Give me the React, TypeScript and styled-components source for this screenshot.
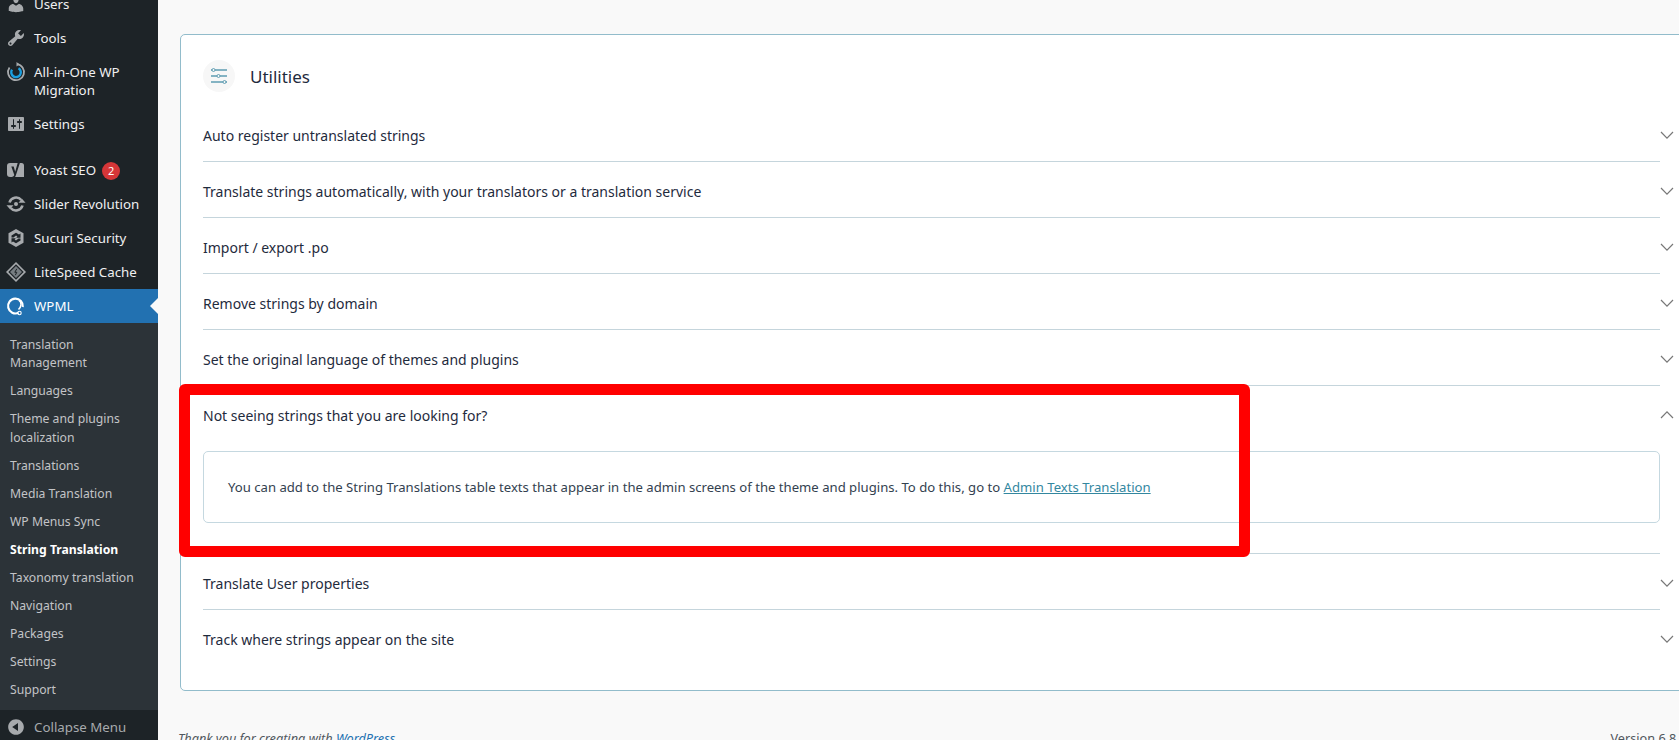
import styled, { createGlobalStyle } from "styled-components";

const GlobalStyle = createGlobalStyle`
  html, body {
    margin: 0;
    height: 740px;
    overflow: hidden;
    background: #f9f9f9;
    font-family: "Noto Sans", "Open Sans", sans-serif;
  }
`;

const Page = styled.div`
  display: flex;
  width: 1679px;
  height: 740px;
  overflow: hidden;
`;

const Sidebar = styled.aside`
  flex: 0 0 158px;
  height: 740px;
  display: flex;
  flex-direction: column;
  justify-content: flex-end;
  overflow: hidden;
  background: #1d2327;
`;

const MenuItem = styled.div<{ $gap?: number }>`
  display: flex;
  flex: 0 0 auto;
  align-items: flex-start;
  gap: 8px;
  padding: 8px 8px 8px 6px;
  margin-bottom: ${(p) => p.$gap ?? 0}px;
  color: #f0f0f1;
  font-size: 13.3px;
  line-height: 18px;
`;

const ActiveItem = styled(MenuItem)`
  position: relative;
  align-items: center;
  background: #2271b1;
  color: #fff;
  height: 34px;
  padding-top: 0;
  padding-bottom: 0;
  box-sizing: border-box;
  &::after {
    content: "";
    position: absolute;
    right: 0;
    top: 9px;
    border: 8px solid transparent;
    border-right-color: #f9f9f9;
    border-left-width: 0;
  }
`;

const IconSlot = styled.span`
  flex: 0 0 20px;
  width: 20px;
  height: 20px;
  margin: -1px 0;
  display: flex;
  color: #a7aaad;
`;

const Badge = styled.span`
  display: inline-flex;
  align-items: center;
  justify-content: center;
  width: 18px;
  height: 18px;
  margin: -3px 0 -3px 6px;
  border-radius: 50%;
  background: #d63638;
  color: #fff;
  font-size: 11px;
  vertical-align: middle;
`;

const Submenu = styled.div`
  flex: 0 0 auto;
  background: #2c3338;
  padding: 8px 0 6.2px;
`;

const SubItem = styled.div<{ $current?: boolean }>`
  padding: 4.8px 10px;
  color: ${(p) => (p.$current ? "#fff" : "#c3c4c7")};
  font-weight: ${(p) => (p.$current ? 700 : 400)};
  font-size: 12.2px;
  line-height: 18.4px;
`;

const SubLabel = styled.span`
  white-space: pre-line;
`;

const Collapse = styled(MenuItem)`
  align-items: center;
  height: 30px;
  padding-top: 4px;
  padding-bottom: 0;
  box-sizing: border-box;
  color: #a7aaad;
`;

const Main = styled.main`
  flex: 1 1 auto;
  min-width: 0;
  display: flex;
  flex-direction: column;
  padding: 34px 0 0 22px;
`;

const Panel = styled.section`
  width: 1520px;
  height: 657px;
  box-sizing: border-box;
  padding: 25px 0 0 22px;
  background: #fff;
  border: 1px solid #92bccb;
  border-radius: 5px;
  flex: 0 0 auto;
`;

const PanelHeader = styled.header`
  display: flex;
  align-items: center;
  gap: 15px;
  height: 32px;
  margin-bottom: 14px;
`;

const HeaderIcon = styled.span`
  width: 32px;
  height: 32px;
  border-radius: 50%;
  background: #f7f7f7;
  display: flex;
  align-items: center;
  justify-content: center;
`;

const PanelTitle = styled.h2`
  margin: 0;
  font-size: 17px;
  font-weight: 400;
  color: #1f2b3d;
`;

const Row = styled.div`
  display: flex;
  width: 1476px;
`;

const RowBody = styled.div<{ $last?: boolean }>`
  width: 1457px;
  flex: 0 0 auto;
  box-sizing: border-box;
  border-bottom: ${(p) => (p.$last ? "0" : "1px solid #c5d5dc")};
`;

const RowHead = styled.div`
  height: 55px;
  box-sizing: border-box;
  padding-top: 20px;
  font-size: 14px;
  line-height: 20px;
  color: #1f2b3d;
`;

const Arrow = styled.span<{ $open?: boolean }>`
  margin: 22px 0 0 0;
  width: 14px;
  height: 14px;
  color: #777;
  display: flex;
  transform: ${(p) => (p.$open ? "rotate(180deg)" : "none")};
`;

const OpenBody = styled.div`
  height: 112px;
  box-sizing: border-box;
  padding-top: 10px;
`;

const DetailBox = styled.div`
  height: 72px;
  box-sizing: border-box;
  padding: 0 24px;
  display: flex;
  align-items: center;
  border: 1px solid #c5d8e0;
  border-radius: 5px;
  font-size: 13.14px;
  color: #33414f;
  white-space: pre;
`;

const DetailLink = styled.a`
  color: #33879f;
  text-decoration: underline;
`;

const Highlight = styled.div`
  position: absolute;
  left: 179px;
  top: 384px;
  width: 1071px;
  height: 173px;
  box-sizing: border-box;
  border: 11px solid #ff0000;
  border-radius: 6px;
  pointer-events: none;
`;

const Footer = styled.footer`
  display: flex;
  justify-content: space-between;
  width: 1520px;
  margin-top: 38px;
  font-size: 12.7px;
  line-height: 18px;
  color: #50575e;
`;

const Thanks = styled.span`
  font-style: italic;
  margin-left: -2px;
  a {
    color: #2271b1;
    text-decoration: underline;
  }
`;

const Version = styled.span`
  margin-right: 13px;
`;

const Dash = ({ d }: { d: string }) => (
  <svg width="20" height="20" viewBox="0 0 20 20" fill="currentColor">
    <path d={d} />
  </svg>
);

const usersPath =
  "M10 9.25c-2.27 0-2.73-3.44-2.73-3.44C7 4.02 7.82 2 9.97 2c2.16 0 2.98 2.02 2.71 3.81 0 0-.41 3.44-2.68 3.44zm0 2.57L12.72 10c2.39 0 4.52 2.33 4.52 4.53v2.49s-3.65 1.13-7.24 1.13c-3.65 0-7.24-1.13-7.24-1.13v-2.49c0-2.25 1.94-4.48 4.47-4.48z";
const toolsPath =
  "M16.68 9.77c-1.34 1.34-3.3 1.67-4.95.99l-5.41 6.52c-.99.99-2.59.99-3.58 0s-.99-2.59 0-3.58l6.52-5.42c-.68-1.65-.35-3.61.99-4.95 1.28-1.28 3.12-1.62 4.72-1.06l-2.89 2.89 2.82 2.82 2.86-2.87c.53 1.58.18 3.39-1.08 4.66zM3.81 16.21c.4.39 1.04.39 1.43 0 .4-.4.4-1.04 0-1.43-.39-.4-1.03-.4-1.43 0-.39.39-.39 1.03 0 1.43z";
const settingsPath =
  "M18 16V4c0-.55-.45-1-1-1H3c-.55 0-1 .45-1 1v12c0 .55.45 1 1 1h14c.55 0 1-.45 1-1zM8 11h1c.55 0 1 .45 1 1s-.45 1-1 1H8v1.5c0 .28-.22.5-.5.5s-.5-.22-.5-.5V13H6c-.55 0-1-.45-1-1s.45-1 1-1h1V5.5c0-.28.22-.5.5-.5s.5.22.5.5V11zm5-2h-1c-.55 0-1-.45-1-1s.45-1 1-1h1V5.5c0-.28.22-.5.5-.5s.5.22.5.5V7h1c.55 0 1 .45 1 1s-.45 1-1 1h-1v5.5c0 .28-.22.5-.5.5s-.5-.22-.5-.5V9z";
const collapsePath =
  "M10 2.16c4.33 0 7.84 3.51 7.84 7.84s-3.51 7.84-7.84 7.84S2.16 14.33 2.16 10 5.71 2.16 10 2.16zm2 11.72V6.12L6.18 9.97z";

const MigrationIcon = () => (
  <svg width="20" height="20" viewBox="0 0 20 20" fill="none">
    <path d="M11 2.200a8 8 0 1 1-7.500 3.300" stroke="#a7aaad" strokeWidth="1.800" />
    <path d="M10.500 0v4.500l3-2.300z" fill="#a7aaad" />
    <path d="M12.500 6.200a4.800 4.800 0 1 1-6.500 1.500" stroke="#1b9fe0" strokeWidth="2.400" />
  </svg>
);

const YoastIcon = () => (
  <svg width="20" height="20" viewBox="0 0 20 20">
    <path d="M4 3h11.500a2.500 2.500 0 0 1 2.500 2.500V17H4a3 3 0 0 1-3-3V6a3 3 0 0 1 3-3z" fill="#a7aaad" />
    <path d="M5.300 6.500h2.400l1.500 5.200L12.300.8h2.300L9.800 15.500c-.6 1.900-1.900 3-3.800 3v-1.700c1.200 0 1.900-.6 2.300-1.800z" fill="#1d2327" />
  </svg>
);

const SliderIcon = () => (
  <svg width="20" height="20" viewBox="0 0 20 20" fill="none">
    <path d="M3.500 8.500a6.800 6.800 0 0 1 11.800-2.500" stroke="#a7aaad" strokeWidth="2.600" />
    <path d="M16.500 11.500a6.800 6.800 0 0 1-11.800 2.500" stroke="#a7aaad" strokeWidth="2.600" />
    <path d="M12.500 8.800h7l-3.500-4zM7.500 11.200h-7l3.500 4z" fill="#a7aaad" />
    <circle cx="10" cy="10" r="2" fill="#a7aaad" />
  </svg>
);

const SucuriIcon = () => (
  <svg width="20" height="20" viewBox="0 0 20 20">
    <path d="M10 1l7.500 4.300v9.400L10 19l-7.500-4.300V5.300z" fill="#a7aaad" />
    <path d="M5.500 9.500V7.500L10 4.800l3 1.700 1.500-1v4.200h-4.300l1.200-1.200L10 7.600 7.500 9.500zM14.500 10.500v2L10 15.200l-3-1.700-1.500 1v-4.200h4.300l-1.200 1.200 1.400.9 2.500-1.900z" fill="#1d2327" />
  </svg>
);

const LiteSpeedIcon = () => (
  <svg width="20" height="20" viewBox="0 0 20 20" fill="none">
    <path d="M10 0L20 10 10 20 0 10z" fill="#a7aaad" />
    <path d="M10 2.300L17.700 10 10 17.700 2.300 10z" fill="#1d2327" />
    <path d="M10 4L16 10 10 16 4 10z" fill="#777d82" />
    <path d="M10.800 6.800L8.800 10.300h2L9.300 13.200" stroke="#1d2327" strokeWidth="1" />
  </svg>
);

const WpmlIcon = () => (
  <svg width="20" height="20" viewBox="0 0 20 20" fill="none">
    <path d="M12.500 16.800A7.400 7.400 0 1 1 16.800 11" stroke="#fff" strokeWidth="2.200" />
    <path d="M13 4.500c3 2 2.500 6-.5 9" stroke="#fff" strokeWidth="1.500" />
    <circle cx="13.500" cy="17" r="1.700" stroke="#fff" strokeWidth="1.100" />
  </svg>
);

const SlidersGlyph = () => (
  <svg width="16" height="16" viewBox="0 0 16 16" fill="none" stroke="#5f9db2" strokeWidth="1">
    <path d="M4 2h12M0 2h1M0 8h6M9 8h7M0 14h12M15 14h1" strokeWidth="1.500" />
    <circle cx="2.500" cy="2" r="1.500" />
    <circle cx="7.500" cy="8" r="1.500" />
    <circle cx="13.500" cy="14" r="1.500" />
  </svg>
);

const ChevronGlyph = () => (
  <svg width="14" height="14" viewBox="0 0 14 14" fill="none" stroke="currentColor" strokeWidth="1.200">
    <path d="M1 4l6 6.200 6-6.200" />
  </svg>
);

const subItems = [
  "Translation\nManagement",
  "Languages",
  "Theme and plugins\nlocalization",
  "Translations",
  "Media Translation",
  "WP Menus Sync",
  "String Translation",
  "Taxonomy translation",
  "Navigation",
  "Packages",
  "Settings",
  "Support",
];

const topRows = [
  "Auto register untranslated strings",
  "Translate strings automatically, with your translators or a translation service",
  "Import / export .po",
  "Remove strings by domain",
  "Set the original language of themes and plugins",
];

export default function App() {
  return (
    <Page>
      <GlobalStyle />
      <Sidebar>
        <MenuItem>
          <IconSlot><Dash d={usersPath} /></IconSlot>
          <span>Users</span>
        </MenuItem>
        <MenuItem>
          <IconSlot><Dash d={toolsPath} /></IconSlot>
          <span>Tools</span>
        </MenuItem>
        <MenuItem>
          <IconSlot><MigrationIcon /></IconSlot>
          <span>All-in-One WP Migration</span>
        </MenuItem>
        <MenuItem $gap={12}>
          <IconSlot><Dash d={settingsPath} /></IconSlot>
          <span>Settings</span>
        </MenuItem>
        <MenuItem>
          <IconSlot><YoastIcon /></IconSlot>
          <span>Yoast SEO<Badge>2</Badge></span>
        </MenuItem>
        <MenuItem>
          <IconSlot><SliderIcon /></IconSlot>
          <span>Slider Revolution</span>
        </MenuItem>
        <MenuItem>
          <IconSlot><SucuriIcon /></IconSlot>
          <span>Sucuri Security</span>
        </MenuItem>
        <MenuItem>
          <IconSlot><LiteSpeedIcon /></IconSlot>
          <span>LiteSpeed Cache</span>
        </MenuItem>
        <ActiveItem>
          <IconSlot><WpmlIcon /></IconSlot>
          <span>WPML</span>
        </ActiveItem>
        <Submenu>
          {subItems.map((label) => (
            <SubItem key={label} $current={label === "String Translation"}>
              <SubLabel>{label}</SubLabel>
            </SubItem>
          ))}
        </Submenu>
        <Collapse>
          <IconSlot><Dash d={collapsePath} /></IconSlot>
          <span>Collapse Menu</span>
        </Collapse>
      </Sidebar>
      <Main>
        <Panel>
          <PanelHeader>
            <HeaderIcon><SlidersGlyph /></HeaderIcon>
            <PanelTitle>Utilities</PanelTitle>
          </PanelHeader>
          {topRows.map((label) => (
            <Row key={label}>
              <RowBody><RowHead>{label}</RowHead></RowBody>
              <Arrow><ChevronGlyph /></Arrow>
            </Row>
          ))}
          <Row>
            <RowBody>
              <RowHead>Not seeing strings that you are looking for?</RowHead>
              <OpenBody>
                <DetailBox>
                  You can add to the String Translations table texts that appear in the admin screens of the theme and plugins. To do this, go to{" "}
                  <DetailLink href="#">Admin Texts Translation</DetailLink>
                </DetailBox>
              </OpenBody>
            </RowBody>
            <Arrow $open><ChevronGlyph /></Arrow>
          </Row>
          <Row>
            <RowBody><RowHead>Translate User properties</RowHead></RowBody>
            <Arrow><ChevronGlyph /></Arrow>
          </Row>
          <Row>
            <RowBody $last><RowHead>Track where strings appear on the site</RowHead></RowBody>
            <Arrow><ChevronGlyph /></Arrow>
          </Row>
        </Panel>
        <Footer>
          <Thanks>Thank you for creating with <a href="#">WordPress</a>.</Thanks>
          <Version>Version 6.8.1</Version>
        </Footer>
      </Main>
      <Highlight />
    </Page>
  );
}
